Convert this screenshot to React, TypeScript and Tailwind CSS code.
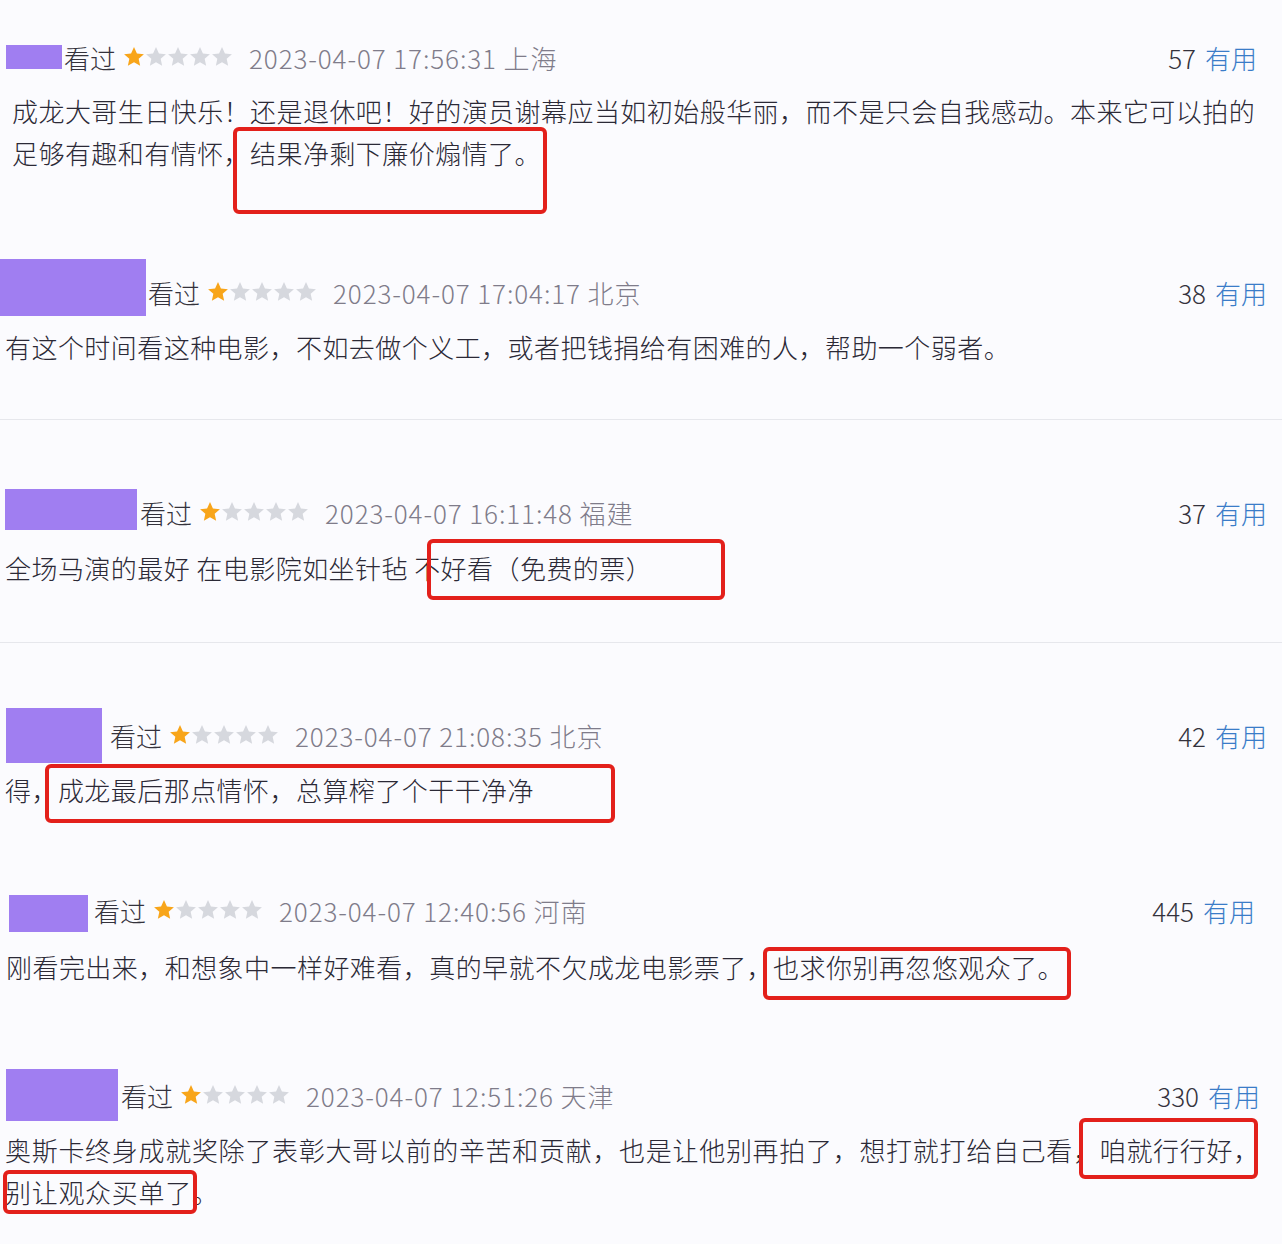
import React from 'react';

interface Review {
    votes: number;
    date: string;
    lines: string[];
    wrap: string;
    head: string;
    purple: string;
    nameGap: string;
    right: string;
    body: string;
    boxes: string[];
}

const reviews: Review[] = [
    {
        votes: 57,
        date: '2023-04-07 17:56:31 上海',
        lines: [
            '成龙大哥生日快乐！还是退休吧！好的演员谢幕应当如初始般华丽，而不是只会自我感动。本来它可以拍的',
            '足够有趣和有情怀，结果净剩下廉价煽情了。',
        ],
        wrap: 'h-[235px] pt-[27px]',
        head: 'pl-[6px]',
        purple: 'w-[56px] h-[24px]',
        nameGap: 'ml-[2px]',
        right: 'pr-[25px]',
        body: 'mt-[3px] pl-[12px] tracking-[0.45px]',
        boxes: ['left-[233px] top-[127px] w-[314px] h-[87px]'],
    },
    {
        votes: 38,
        date: '2023-04-07 17:04:17 北京',
        lines: ['有这个时间看这种电影，不如去做个义工，或者把钱捐给有困难的人，帮助一个弱者。'],
        wrap: 'h-[185px] pt-[27px] border-b border-[#e6e7ec]',
        head: 'pl-0',
        purple: 'w-[146px] h-[57px] mb-[9px]',
        nameGap: 'ml-[2px]',
        right: 'pr-[15px]',
        body: 'mt-[4px] pl-[5px] tracking-[0.45px]',
        boxes: [],
    },
    {
        votes: 37,
        date: '2023-04-07 16:11:48 福建',
        lines: ['全场马演的最好 在电影院如坐针毡 不好看（免费的票）'],
        wrap: 'h-[223px] pt-[62px] border-b border-[#e6e7ec]',
        head: 'pl-[5px]',
        purple: 'w-[132px] h-[41px] mb-[5px]',
        nameGap: 'ml-[3px]',
        right: 'pr-[15px]',
        body: 'mt-[5px] pl-[5px] tracking-[0.45px]',
        boxes: ['left-[427px] top-[119px] w-[298px] h-[61px]'],
    },
    {
        votes: 42,
        date: '2023-04-07 21:08:35 北京',
        lines: ['得，成龙最后那点情怀，总算榨了个干干净净'],
        wrap: 'h-[217px] pt-[62px]',
        head: 'pl-[6px]',
        purple: 'w-[96px] h-[55px]',
        nameGap: 'ml-[8px]',
        right: 'pr-[15px]',
        body: 'mt-[4px] pl-[5px] tracking-[0.45px]',
        boxes: ['left-[45px] top-[121px] w-[570px] h-[59px]'],
    },
    {
        votes: 445,
        date: '2023-04-07 12:40:56 河南',
        lines: ['刚看完出来，和想象中一样好难看，真的早就不欠成龙电影票了，也求你别再忽悠观众了。'],
        wrap: 'h-[180px] pt-[20px]',
        head: 'pl-[9px]',
        purple: 'w-[79px] h-[37px] mt-[6px]',
        nameGap: 'ml-[6px]',
        right: 'pr-[27px]',
        body: 'mt-[6px] pl-[6px] tracking-[0.45px]',
        boxes: ['left-[763px] top-[87px] w-[308px] h-[53px]'],
    },
    {
        votes: 330,
        date: '2023-04-07 12:51:26 天津',
        lines: [
            '奥斯卡终身成就奖除了表彰大哥以前的辛苦和贡献，也是让他别再拍了，想打就打给自己看，咱就行行好，',
            '别让观众买单了。',
        ],
        wrap: 'h-[204px] pt-[25px]',
        head: 'pl-[6px]',
        purple: 'w-[112px] h-[52px]',
        nameGap: 'ml-[3px]',
        right: 'pr-[22px]',
        body: 'mt-[4px] pl-[5px] tracking-[0.7px]',
        boxes: [
            'left-[1079px] top-[78px] w-[179px] h-[61px]',
            'left-[3px] top-[130px] w-[194px] h-[44px]',
        ],
    },
];

function Star({ on }: { on: boolean }) {
    return (
        <svg width="22" height="22" viewBox="0 0 24 24" className="shrink-0">
            <path
                d="M12 1l3.2 7.1 7.6.8-5.7 5.1 1.6 7.6L12 17.7l-6.7 3.9 1.6-7.6L1.2 8.9l7.6-.8z"
                fill={on ? '#f8a51a' : '#d6d8de'}
            />
        </svg>
    );
}

function ReviewItem({ r }: { r: Review }) {
    return (
        <div className={`relative ${r.wrap}`}>
            <div className={`flex items-center h-[60px] ${r.head} ${r.right}`}>
                <div className={`shrink-0 bg-[#a07ef1] ${r.purple}`} />
                <span className={`text-[26px] font-light text-[#34323c] ${r.nameGap}`}>看过</span>
                <div className="flex ml-[7px]">
                    {[0, 1, 2, 3, 4].map((i) => (
                        <Star key={i} on={i === 0} />
                    ))}
                </div>
                <span className="ml-[16px] text-[26px] font-light text-[#7f7c8a] tracking-[0.9px]">{r.date}</span>
                <div className="ml-auto flex items-center gap-[9px] text-[26px] font-light">
                    <span className="text-[#34323c]">{r.votes}</span>
                    <span className="text-[#3a7cc8]">有用</span>
                </div>
            </div>
            <div className={`text-[26px] font-light leading-[42px] text-[#2b2936] ${r.body}`}>
                {r.lines.map((l, i) => (
                    <div key={i} className="whitespace-nowrap">{l}</div>
                ))}
            </div>

            {/* red highlight frames drawn over the text */}
            {r.boxes.map((b, i) => (
                <div key={i} className={`absolute border-4 border-[#e3201b] rounded-[6px] ${b}`} />
            ))}
        </div>
    );
}

export default function App() {
    return (
        <div
            className="w-[1282px] h-[1244px] overflow-hidden bg-[#fbfbfe]"
            style={{ fontFamily: '"Noto Sans CJK SC", "Noto Sans", sans-serif' }}
        >
            {reviews.map((r) => (
                <ReviewItem key={r.date} r={r} />
            ))}
        </div>
    );
}
